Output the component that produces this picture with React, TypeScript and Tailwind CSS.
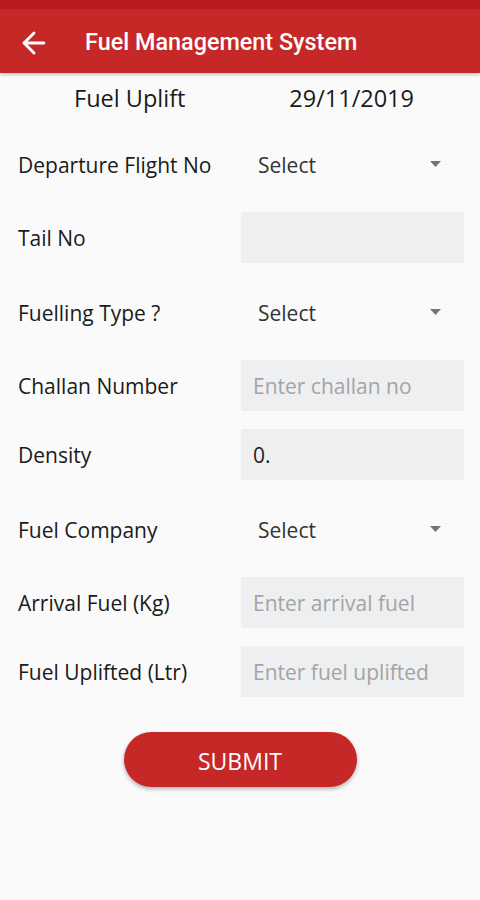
import { ArrowLeft } from "lucide-react";

type Field =
  | { label: string; kind: "select"; mt: string }
  | { label: string; kind: "input"; mt: string; placeholder?: string; value?: string };

const fields: Field[] = [
  { label: "Departure Flight No", kind: "select", mt: "mt-[25px]" },
  { label: "Tail No", kind: "input", mt: "mt-[23px]" },
  { label: "Fuelling Type ?", kind: "select", mt: "mt-[25px]" },
  { label: "Challan Number", kind: "input", mt: "mt-[23px]", placeholder: "Enter challan no" },
  { label: "Density", kind: "input", mt: "mt-[19px]", value: "0." },
  { label: "Fuel Company", kind: "select", mt: "mt-[25px]" },
  { label: "Arrival Fuel (Kg)", kind: "input", mt: "mt-[23px]", placeholder: "Enter arrival fuel" },
  { label: "Fuel Uplifted (Ltr)", kind: "input", mt: "mt-[19px]", placeholder: "Enter fuel uplifted" },
];

function SelectBox() {
  return (
    <div className="flex h-full flex-1 items-center pl-[17px] pr-[39px]">
      <span className="pt-[3px] text-[21px] text-[#333]">Select</span>
      <svg className="ml-auto" width="11" height="6" viewBox="0 0 11 6">
        <path d="M0 0h11L5.5 6z" fill="#757575" />
      </svg>
    </div>
  );
}

function InputBox({ placeholder, value }: { placeholder?: string; value?: string }) {
  return (
    <div className="mr-4 flex h-[51px] flex-1 items-center bg-[#eeeff0] pl-3">
      {value ? (
        <span className="pt-[3px] text-[21px] text-[#222]">{value}</span>
      ) : (
        <span className="pt-[3px] text-[21px] text-[#a4a4a4]">{placeholder}</span>
      )}
    </div>
  );
}

export default function App() {
  return (
    <div className="flex min-h-[900px] w-[480px] flex-col bg-[#fafafa] font-['Open_Sans',sans-serif]">
      <div className="h-[9px] bg-[#b71c1c]" />
      <div className="flex h-[64px] items-center bg-[#c62828] shadow-[0_2px_3px_rgba(0,0,0,0.2)]">
        <ArrowLeft className="ml-[17px] mt-[4px] text-white" size={34} strokeWidth={2} />
        <span className="ml-[34px] mt-[4px] font-['Roboto',sans-serif] text-[23.4px] font-medium text-white">
          Fuel Management System
        </span>
      </div>

      <div className="mt-[11px] flex h-[30px] items-center text-[23.5px] text-[#1a1a1a]">
        <span className="ml-[74px]">Fuel Uplift</span>
        <span className="ml-auto mr-[66px]">29/11/2019</span>
      </div>

      <div className="flex flex-col">
        {fields.map((f) => (
          <div key={f.label} className={`flex h-[50px] items-center ${f.mt}`}>
            <span className="w-[241px] shrink-0 pl-[18px] pt-[3px] text-[21px] text-[#1a1a1a]">{f.label}</span>
            {f.kind === "select" ? (
              <SelectBox />
            ) : (
              <InputBox placeholder={f.placeholder} value={f.value} />
            )}
          </div>
        ))}
      </div>

      <div className="mt-[36px] flex justify-center">
        <button className="h-[55px] w-[233px] rounded-full bg-[#c62828] pt-[3px] text-[23px] text-white shadow-[0_2px_4px_rgba(0,0,0,0.3)]">
          SUBMIT
        </button>
      </div>
    </div>
  );
}
